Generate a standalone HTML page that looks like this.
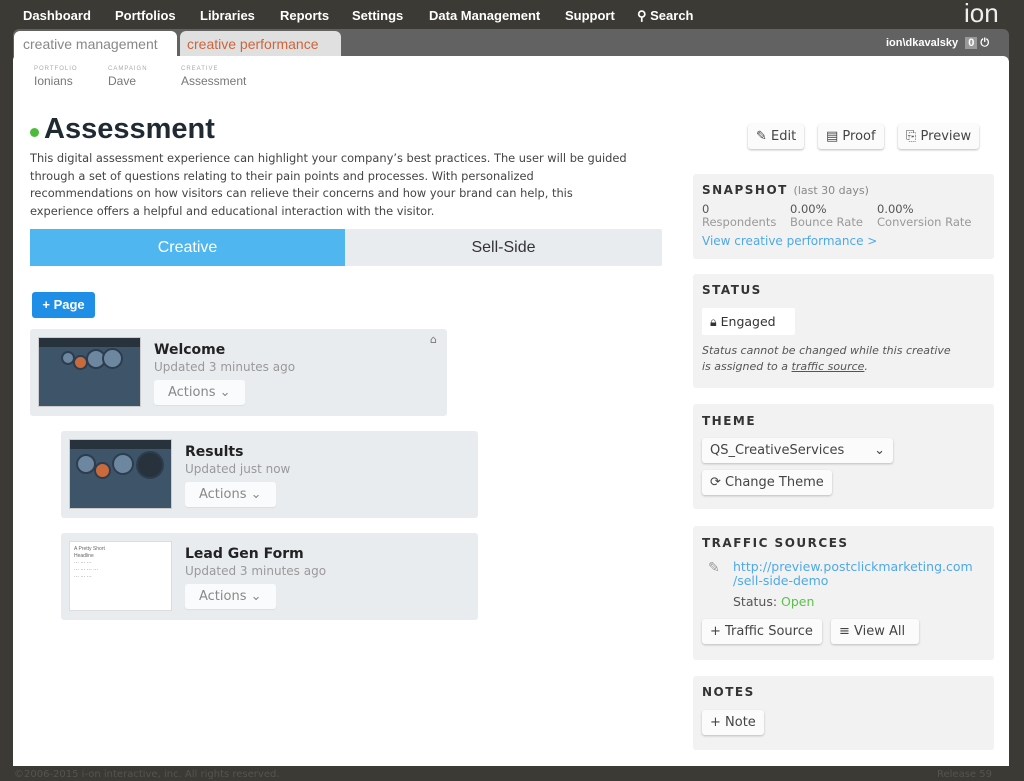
<!DOCTYPE html>
<html><head><meta charset="utf-8"><style>
*{box-sizing:border-box;margin:0;padding:0}
body{width:1024px;height:781px;background:#3b3a34;font-family:"DejaVu Sans","Liberation Sans",sans-serif;position:relative;overflow:hidden;color:#333}
.abs{position:absolute}
.nav{color:#fff;font-family:"Liberation Sans",sans-serif;font-weight:bold;font-size:13px;top:8px}
.bar{left:13px;top:29px;width:996px;height:30px;background:#626262;border-radius:6px 6px 0 0}
.panel{left:13px;top:56px;width:996px;height:710px;background:#fff;border-radius:4px 6px 0 0}
.small{font-size:6px;color:#aaa;letter-spacing:1px;font-family:"Liberation Sans",sans-serif}
.crumb{font-size:12px;color:#777;font-family:"Liberation Sans",sans-serif}
.card{background:#e9ecef;border-radius:3px}
.thumb{background:#3e5468;border:1px solid #ccc;overflow:hidden}
.ttl{font-weight:bold;font-size:14px;color:#222}
.upd{font-size:12px;color:#999}
.act{background:#fafbfc;border-radius:3px;font-size:13px;color:#888;padding:5px 14px;box-shadow:0 1px 1px #ddd}
.box{background:#f2f2f2;border-radius:3px;left:693px;width:301px}
.hd{font-weight:bold;font-size:12px;letter-spacing:1.5px;color:#333}
.btn{background:#fbfbfb;border-radius:3px;box-shadow:0 1px 2px #bbb;font-size:13px;color:#444;padding:5px 8px}
.c{position:absolute;border-radius:50%;background:#6d87a0;border:2px solid #2c3d4e}
</style></head><body>
<div class="abs nav" style="left:23px">Dashboard</div>
<div class="abs nav" style="left:115px">Portfolios</div>
<div class="abs nav" style="left:200px">Libraries</div>
<div class="abs nav" style="left:280px">Reports</div>
<div class="abs nav" style="left:352px">Settings</div>
<div class="abs nav" style="left:429px">Data Management</div>
<div class="abs nav" style="left:565px">Support</div>
<div class="abs nav" style="left:637px">⚲ Search</div>
<div class="abs" style="left:964px;top:-2px;color:#eee;font-size:26px;font-family:'Liberation Sans',sans-serif">ion</div>
<div class="abs bar"></div>
<div class="abs" style="left:14px;top:31px;width:163px;height:26px;background:#fff;border-radius:6px 6px 0 0;color:#888;font-size:14px;padding:5px 9px;font-family:'Liberation Sans',sans-serif">creative management</div>
<div class="abs" style="left:180px;top:31px;width:161px;height:25px;background:#e0e0e0;border-radius:6px 6px 0 0;color:#d0643a;font-size:14px;padding:5px 7px;font-family:'Liberation Sans',sans-serif">creative performance</div>
<div class="abs" style="left:886px;top:37px;color:#fff;font-size:11px;font-weight:bold;font-family:'Liberation Sans',sans-serif">ion\dkavalsky <span style="background:#999;padding:0 3px;margin-left:4px">0</span> ⏻</div>
<div class="abs panel"></div>
<div class="abs small" style="left:34px;top:66px">PORTFOLIO</div><div class="abs crumb" style="left:34px;top:74px">Ionians</div>
<div class="abs small" style="left:108px;top:66px">CAMPAIGN</div><div class="abs crumb" style="left:108px;top:74px">Dave</div>
<div class="abs small" style="left:181px;top:66px">CREATIVE</div><div class="abs crumb" style="left:181px;top:74px">Assessment</div>
<div class="abs" style="left:30px;top:128px;width:9px;height:9px;border-radius:50%;background:#4cbb3c"></div>
<div class="abs" style="left:44px;top:113px;font-size:29px;font-weight:bold;color:#1f2a33;font-family:'Liberation Sans',sans-serif">Assessment</div>
<div class="abs" style="left:30px;top:150px;width:640px;font-size:11.4px;line-height:17.5px;color:#444;white-space:nowrap">This digital assessment experience can highlight your company’s best practices. The user will be guided<br>through a set of questions relating to their pain points and processes. With personalized<br>recommendations on how visitors can relieve their concerns and how your brand can help, this<br>experience offers a helpful and educational interaction with the visitor.</div>
<div class="abs" style="left:30px;top:229px;width:632px;height:37px;background:#e9ecef;border-radius:2px"></div>
<div class="abs" style="left:30px;top:229px;width:315px;height:37px;background:#4fb6ef;color:#fff;font-size:16px;text-align:center;line-height:37px;font-family:'Liberation Sans',sans-serif">Creative</div>
<div class="abs" style="left:345px;top:229px;width:317px;height:37px;color:#333;font-size:16px;text-align:center;line-height:37px;font-family:'Liberation Sans',sans-serif">Sell-Side</div>
<div class="abs" style="left:32px;top:292px;width:63px;height:26px;background:#1e8ee6;border-radius:3px;color:#fff;font-weight:bold;font-size:13px;line-height:26px;text-align:center;font-family:'Liberation Sans',sans-serif">+ Page</div>

<div class="abs card" style="left:30px;top:329px;width:417px;height:87px"></div>
<div class="abs thumb" style="left:38px;top:337px;width:103px;height:70px"><div style="height:9px;background:#27323c"></div><div class="c" style="left:22px;top:13px;width:14px;height:14px"></div><div class="c" style="left:34px;top:17px;width:15px;height:15px;background:#c96a3c"></div><div class="c" style="left:47px;top:11px;width:20px;height:20px"></div><div class="c" style="left:63px;top:10px;width:21px;height:21px"></div></div>
<div class="abs" style="left:430px;top:333px;font-size:11px;color:#777">⌂</div>
<div class="abs ttl" style="left:154px;top:342px">Welcome</div>
<div class="abs upd" style="left:154px;top:360px">Updated 3 minutes ago</div>
<div class="abs act" style="left:154px;top:380px">Actions ⌄</div>

<div class="abs card" style="left:61px;top:431px;width:417px;height:87px"></div>
<div class="abs thumb" style="left:69px;top:439px;width:103px;height:70px"><div style="height:9px;background:#27323c"></div><div class="c" style="left:6px;top:14px;width:20px;height:20px"></div><div class="c" style="left:24px;top:22px;width:17px;height:17px;background:#c96a3c"></div><div class="c" style="left:42px;top:13px;width:22px;height:22px"></div><div class="c" style="left:66px;top:11px;width:28px;height:28px;background:#27323c"></div></div>
<div class="abs ttl" style="left:185px;top:444px">Results</div>
<div class="abs upd" style="left:185px;top:462px">Updated just now</div>
<div class="abs act" style="left:185px;top:482px">Actions ⌄</div>

<div class="abs card" style="left:61px;top:533px;width:417px;height:87px"></div>
<div class="abs" style="left:69px;top:541px;width:103px;height:70px;background:#fff;border:1px solid #ddd;font-size:5px;color:#666;padding:4px;line-height:7px;font-family:'Liberation Sans',sans-serif">A Pretty Short<br>Headline<br>··· ··· ···<br>··· ··· ··· ···<br>··· ··· ···</div>
<div class="abs ttl" style="left:185px;top:546px">Lead Gen Form</div>
<div class="abs upd" style="left:185px;top:564px">Updated 3 minutes ago</div>
<div class="abs act" style="left:185px;top:584px">Actions ⌄</div>

<div class="abs btn" style="left:748px;top:124px">✎ Edit</div>
<div class="abs btn" style="left:818px;top:124px">▤ Proof</div>
<div class="abs btn" style="left:898px;top:124px">⎘ Preview</div>

<div class="abs box" style="top:174px;height:85px"></div>
<div class="abs hd" style="left:702px;top:183px">SNAPSHOT <span style="font-weight:normal;font-size:11px;letter-spacing:0;color:#888">(last 30 days)</span></div>
<div class="abs" style="left:702px;top:203px;font-size:11.5px;color:#555;line-height:13px">0<br><span style="color:#999">Respondents</span></div>
<div class="abs" style="left:790px;top:203px;font-size:11.5px;color:#555;line-height:13px">0.00%<br><span style="color:#999">Bounce Rate</span></div>
<div class="abs" style="left:877px;top:203px;font-size:11.5px;color:#555;line-height:13px">0.00%<br><span style="color:#999">Conversion Rate</span></div>
<div class="abs" style="left:702px;top:234px;font-size:12px;color:#4fa9e6">View creative performance &gt;</div>

<div class="abs box" style="top:274px;height:114px"></div>
<div class="abs hd" style="left:702px;top:283px">STATUS</div>
<div class="abs" style="left:702px;top:308px;width:93px;height:27px;background:#fff;border-radius:2px;font-size:12.5px;padding:6px 8px;color:#333">🔒︎ Engaged</div>
<div class="abs" style="left:702px;top:343px;font-size:11px;font-style:italic;color:#555;line-height:16px">Status cannot be changed while this creative<br>is assigned to a <u>traffic source</u>.</div>

<div class="abs box" style="top:404px;height:105px"></div>
<div class="abs hd" style="left:702px;top:414px">THEME</div>
<div class="abs btn" style="left:702px;top:438px;width:191px">QS_CreativeServices <span style="float:right">⌄</span></div>
<div class="abs btn" style="left:702px;top:470px">⟳ Change Theme</div>

<div class="abs box" style="top:526px;height:134px"></div>
<div class="abs hd" style="left:702px;top:536px">TRAFFIC SOURCES</div>
<div class="abs" style="left:708px;top:560px;color:#999;font-size:14px">✎</div>
<div class="abs" style="left:733px;top:560px;font-size:12.5px;color:#4fa9e6;line-height:14px">http://preview.postclickmarketing.com<br>/sell-side-demo</div>
<div class="abs" style="left:733px;top:594px;font-size:12.5px;color:#555">Status: <span style="color:#5cc14a">Open</span></div>
<div class="abs btn" style="left:702px;top:619px;width:120px">+ Traffic Source</div>
<div class="abs btn" style="left:831px;top:619px;width:88px">≡ View All</div>

<div class="abs box" style="top:676px;height:74px"></div>
<div class="abs hd" style="left:702px;top:685px">NOTES</div>
<div class="abs btn" style="left:702px;top:710px">+ Note</div>

<div class="abs" style="left:14px;top:769px;font-size:10px;color:#55544d">©2006-2015 i-on interactive, inc. All rights reserved.</div>
<div class="abs" style="left:937px;top:769px;font-size:10px;color:#55544d">Release 59</div>
</body></html>
